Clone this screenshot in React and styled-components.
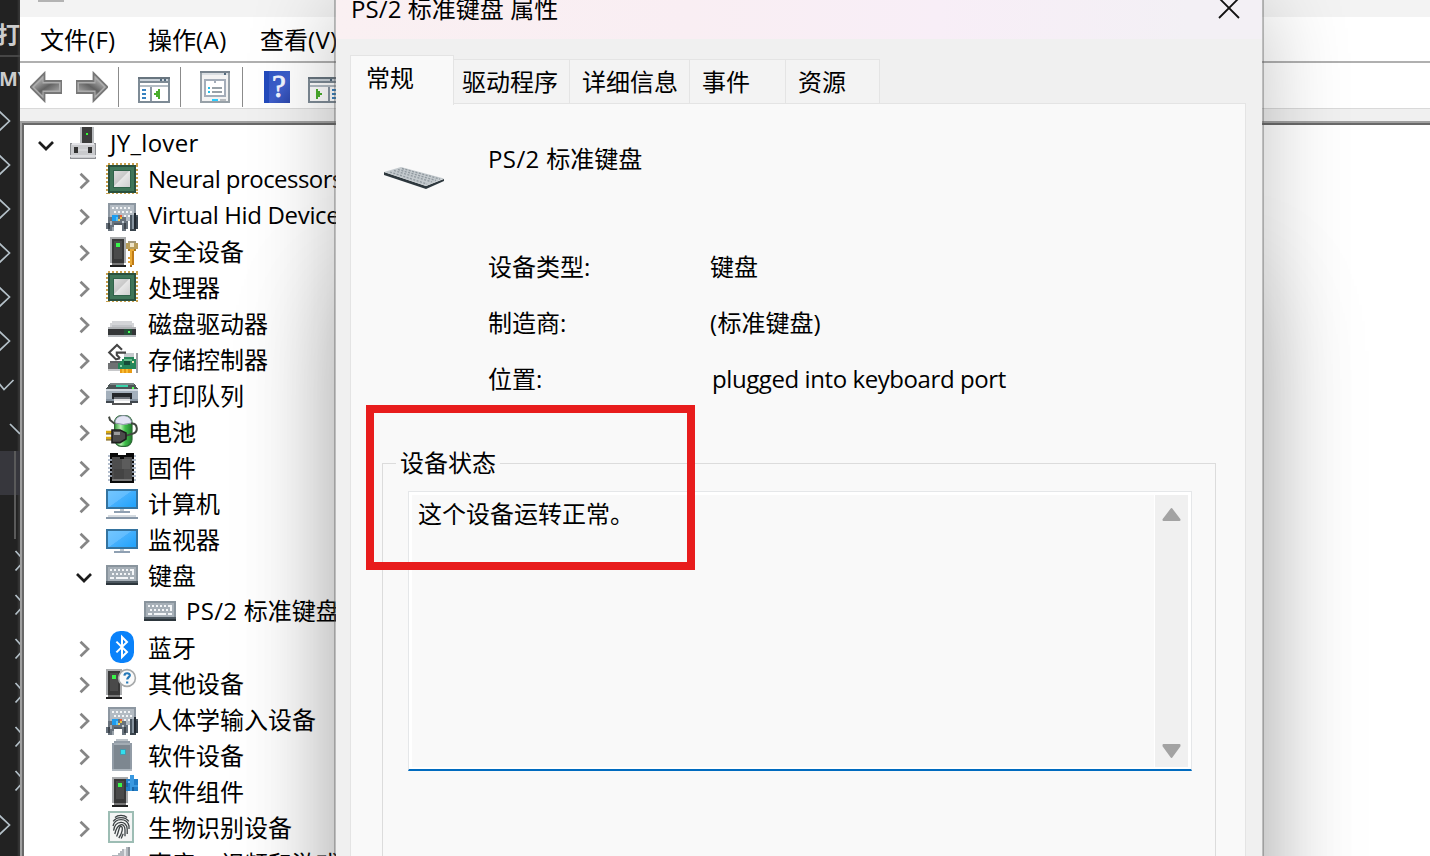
import React from "react";
import styled, { createGlobalStyle } from "styled-components";

const GlobalStyle = createGlobalStyle`
  body { margin: 0; overflow: hidden; }
  * { box-sizing: border-box; }
`;

const Desktop = styled.div`
  position: relative;
  width: 1430px;
  height: 856px;
  overflow: hidden;
  background: #fff;
  color: #000;
  font: 24px/36px "Open Sans", "Noto Sans CJK SC", sans-serif;
  white-space: nowrap;
`;

const LatinRun = styled.span`
  letter-spacing: ${(p) => p.$spacing}px;
`;

/* Latin runs carry their own tracking beside the ideographs. */
function Label({ children, spacing = 0.3 }) {
  const runs = children.split(/([\x20-\x7e]+)/).filter(Boolean);
  return runs.map((run, i) =>
    /^[\x20-\x7e]/.test(run) ? (
      <LatinRun key={i} $spacing={spacing}>{run}</LatinRun>
    ) : (
      run
    )
  );
}

/* ---------- editor strip ---------- */

const EditorStrip = styled.div`
  position: absolute;
  inset: 0 auto 0 0;
  width: 20px;
  overflow: hidden;
  background: linear-gradient(90deg, #222 0 17px, #363636 19px);
  color: #ccc;
`;
const EditorHeading = styled.div`
  height: 57px;
  padding-top: 16px;
  border-bottom: 2px solid #464646;
  text-indent: -3px;
  font-size: 23px;
  font-weight: 600;
`;
const EditorProject = styled.div`
  height: 42px;
  line-height: 44px;
  font-size: 20px;
  font-weight: 700;
  text-indent: -1px;
`;
const EditorLine = styled.div`
  display: flex;
  height: 44px;
  background: ${(p) => (p.$selected ? "#37373d" : "transparent")};
`;
const Guide = styled.div`
  width: 16px;
  border-right: 2px solid #5a5a5a;
`;
const StripSvg = styled.svg`
  display: block;
  flex: none;
  width: 20px;
  height: 44px;
  fill: none;
  stroke: #b4c0c8;
  stroke-width: 1.7;
`;

const stripPaths = {
  right: "M-1 12 L9.5 22 L-1 32",
  down: "M-3 18 L4 26.5 L13.5 17",
  deep: "M10 17 L20 27",
  deepRight: "M15.5 12 L20.500 17.500 M20.500 26 L15.500 31.500",
};
const stripLines = [
  "right", "right", "right", "right", "right", "right", "down", "deep",
  "selected", "guide", "deepRight", "deepRight", "deepRight", "deepRight",
  "deepRight", "deepRight", "right",
];

function Editor() {
  return (
    <EditorStrip>
      <EditorHeading>打</EditorHeading>
      <EditorProject>MY</EditorProject>
      {stripLines.map((kind, i) => (
        <EditorLine key={i} $selected={kind === "selected"}>
          {stripPaths[kind] ? (
            <StripSvg viewBox="0 0 20 44"><path d={stripPaths[kind]} /></StripSvg>
          ) : (
            <Guide />
          )}
        </EditorLine>
      ))}
    </EditorStrip>
  );
}

/* ---------- small pixel drawings, on a 16 unit grid ---------- */

const Glyph = styled.svg`
  display: block;
  flex: none;
  width: 32px;
  height: 32px;
`;

/* Each entry is [x, y, width, height, fill]. */
function Px({ items }) {
  return items.map(([x, y, w, h, f], i) => (
    <rect key={i} x={x} y={y} width={w} height={h} fill={f} />
  ));
}

const crisp = { viewBox: "0 0 16 16", shapeRendering: "crispEdges" };

const ComputerTower = () => (
  <Glyph {...crisp}>
    <Px items={[
      [6, 0, 7, 9, "#b9bcbf"], [7, 0, 5, 8, "#3c3c3c"], [9, 3, 1, 1, "#3f3"],
      [1, 8, 13, 8, "#8e9094"], [1.5, 8.5, 12, 7, "#c9cacd"], [2, 8, 11, 1, "#e4e4e8"],
      [3, 10, 2, 3, "#333"], [10, 10, 2, 3, "#333"], [5, 11, 5, 1, "#d5d6d9"], [1, 14, 13, 1, "#dcdde0"],
    ]} />
  </Glyph>
);

const Chip = () => (
  <Glyph {...crisp}>
    <defs>
      <linearGradient id="die" x2="1" y2="1">
        <stop offset="0" stopColor="#dedede" /><stop offset=".45" stopColor="#c9c9c9" />
        <stop offset=".5" stopColor="#e6e6e6" /><stop offset="1" stopColor="#cfcfcf" />
      </linearGradient>
    </defs>
    <path d="M1 .5H16M1 15H16M.5 1V15.5M15.5 1V15.5" stroke="#c9a04e" strokeDasharray="1 1" />
    <Px items={[[1, 1, 14, 14, "#29503e"], [2, 2, 12, 12, "#3f7558"], [3.5, 3.5, 9, 9, "#2f6249"], [4, 4, 8, 8, "url(#die)"]]} />
  </Glyph>
);

const HumanInput = () => (
  <Glyph {...crisp}>
    <Px items={[
      [1, 2, 14, 9, "#8d97a1"], [2, 3, 12, 8, "#b3bbc3"],
      ...[3, 5, 7, 9, 11].flatMap((x) => [[x, 4, 1, 1, "#f3f5f7"], [x + 1, 6, 1, 1, "#f3f5f7"], [x, 8, 1, 1, "#f3f5f7"]]),
    ]} />
    <path d="M1 9H3V8H8V9H10V11H11V15H10V16H8V13H4V16H1V15H0V12H1Z" fill="#68727c" />
    <Px items={[
      [3, 8, 3, 3, "#1d9df0"], [5, 9, 1, 2, "#55c3ff"], [7, 8, 1, 1, "#e95b35"], [7, 9, 1, 1, "#e8c341"],
      [6, 10, 1, 1, "#f1cc57"], [1, 12, 1, 3, "#3d454d"], [9, 12, 1, 3, "#3d454d"], [2, 11, 1, 2, "#aab3bc"],
      [8, 11, 1, 1, "#c4ccd4"], [4, 12, 4, 1, "#535c65"], [12, 8, 4, 7, "#4a5661"], [12, 15, 3, 1, "#39434c"], [13, 8, 1, 7, "#86939f"],
      [14, 7, 1, 8, "#202830"], [15, 9, 1, 6, "#38434e"], [3, 14, 1, 2, "#99a2aa"],
    ]} />
  </Glyph>
);

const towerAt = (x) => [
  [x, 1, 8, 13, "#a9abad"], [x + 1, 2, 6, 12, "#383838"], [x + 2, 3, 4, 9, "#4a4a4a"],
  [x + 3, 4, 2, 2, "#39f54a"], [x + 1, 14, 6, 1, "#777"], [x, 15, 8, 1, "#1f1f1f"],
];

const Security = () => (
  <Glyph {...crisp}>
    <Px items={[
      ...towerAt(2),
      [11, 3, 4, 1, "#a49a7c"], [10, 4, 6, 3, "#b79d5b"], [12, 4, 2, 2, "#eee5c9"], [11, 7, 4, 1, "#a9791f"],
      [12, 7, 2, 8, "#e9aa34"], [13, 8, 1, 7, "#c07b16"], [11, 11, 1, 1, "#dda03b"], [11, 13, 1, 1, "#dda03b"], [12, 15, 1, 1, "#a86b16"],
    ]} />
  </Glyph>
);

const Disk = () => (
  <Glyph {...crisp}>
    <path d="M3 7H13V8H14V10H15V11H1V10H2V8H3Z" fill="#d4d5d8" />
    <Px items={[[3, 9, 10, 1, "#c2c4c8"], [1, 10, 14, 1, "#b0b2b5"], [1, 11, 14, 3, "#343638"], [9, 11, 4, 3, "#275039"], [11, 12, 1, 1, "#46ff58"], [1, 14, 14, 1, "#b4b8bc"]]} />
  </Glyph>
);

const Storage = () => (
  <Glyph viewBox="0 0 16 16">
    <g shapeRendering="crispEdges">
      <Px items={[[2, 9, 5, 4, "#5d5f62"], [1, 10, 7, 3, "#6f7173"], [1, 13, 6, 1, "#c7c8ca"], [9, 5, 5, 3, "#c7cbce"]]} />
      <path d="M9 7H14V8H15V13H6V10H7V9H8V8H9Z" fill="#258659" />
      <Px items={[
        [9, 8, 4, 1, "#63bc89"], [9, 9, 3, 2, "#154b38"], [13, 9, 1, 1, "#efe8b1"],
        [7, 11, 1, 1, "#8ad5aa"], [15, 5, 1, 10, "#979b9f"], [7, 13, 6, 2, "#e99a13"], [8, 13, 1, 2, "#f7bd34"], [10, 13, 1, 2, "#f7bd34"],
      ]} />
    </g>
    <path d="M8 3.400 5.500 1 1.600 4.800 5 8.200 7 7.600M10 4.800H5.400V6L7 7.600" fill="none" stroke="#454545" strokeWidth="1.050" />
  </Glyph>
);

const Printer = () => (
  <Glyph {...crisp}>
    <path d="M2 2H14L16 5H0Z" fill="#4c5556" />
    <Px items={[
      [2, 2, 12, 1, "#7b8687"], [5, 3, 6, 1, "#38d3aa"], [13, 4, 1, 1, "#5aff59"], [0, 5, 16, 5, "#a4b0bc"], [0, 5, 16, 1, "#d1d9e1"],
      [0, 10, 16, 1, "#8794a1"], [3, 7, 10, 3, "#24282c"], [0, 11, 16, 1, "#40474e"], [4, 9, 8, 1, "#6e7379"], [4, 10, 8, 3, "#e4e5e7"], [3, 12, 10, 1, "#555"], [4, 11, 8, 1, "#fff"],
    ]} />
  </Glyph>
);

const Battery = () => (
  <Glyph viewBox="0 0 16 16">
    <defs>
      <linearGradient id="cell">
        <stop offset="0" stopColor="#3a9a40" /><stop offset=".35" stopColor="#b5f2b0" />
        <stop offset=".6" stopColor="#3fc04a" /><stop offset="1" stopColor="#1f7a2b" />
      </linearGradient>
    </defs>
    <rect x="4.300" y=".3" width="8.700" height="15.400" rx="3.400" fill="url(#cell)" stroke="#2c6a35" strokeWidth=".6" />
    <path d="M4.500 4C4.500-.9 12.800-.9 12.800 4Q8.600 5.500 4.500 4Z" fill="#e3e4f4" stroke="#8e93a8" strokeWidth=".5" />
    <path d="M1.500.8 2 2.500 4.500 4.500M12.500 4.300C16 4 16.300 8.500 13.500 9.300L9.500 10.500" fill="none" stroke="#41463f" />
    <path d="M0 8.500H4M0 11.500H4" stroke="#d9a80f" strokeWidth="1.200" />
    <path d="M0 9.400H4M0 12.400H4" stroke="#7b5d10" strokeWidth=".6" />
    <path d="M3 7.500H7L10 9V12L7 13.800H3Z" fill="#4b4b4b" stroke="#1e1e1e" strokeWidth=".8" />
    <path d="M4 8.500H7V10H4Z" fill="#9b9b9b" />
  </Glyph>
);

const Firmware = () => (
  <Glyph {...crisp}>
    <Px items={[2, 4, 6, 8, 10, 12, 14].map((y) => [1, y, 14, 1, "#b4bfce"])} />
    <Px items={[
      [2, 1, 12, 15, "#0a0a0a"], [6, 1, 4, 1, "#fff"], [3, 3, 10, 12, "#4d4d4d"], [6, 2, 4, 1, "#0a0a0a"], [7, 3, 2, 1, "#0a0a0a"],
      [7, 1, 2, 1, "#fff"], [8, 4, 4, 5, "#5c5c5c"], [4, 9, 5, 5, "#444"], [3, 14, 10, 1, "#777"],
      ...[4, 6, 8, 10, 12].flatMap((y) => [[2, y, 1, 1, "#8b95a3"], [13, y, 1, 1, "#8b95a3"]]),
    ]} />
  </Glyph>
);

const Screen = ({ y, base }) => (
  <Glyph {...crisp}>
    <defs>
      <linearGradient id="panel" x2="1" y2=".8">
        <stop offset="0" stopColor="#72c6ff" /><stop offset=".5" stopColor="#62bdff" />
        <stop offset=".52" stopColor="#45b0fd" /><stop offset="1" stopColor="#25a4fb" />
      </linearGradient>
    </defs>
    <Px items={[[0, y, 16, 10, "#34739f"], [1, y + 1, 14, 8, "url(#panel)"], [7, y + 10, 2, 1, "#b9c5cf"], [4, y + 11, 8, 1, "#8fa0b2"]]} />
    {base && <Px items={[[1, 14, 14, 1, "#d5dbe1"], [0, 15, 16, 1, "#8797a8"]]} />}
  </Glyph>
);
const Computer = () => <Screen y={1} base />;
const Monitor = () => <Screen y={3} />;

const Keyboard = () => (
  <Glyph {...crisp}>
    <Px items={[
      [0, 3, 16, 9, "#89949d"], [1, 4, 14, 7, "#a7b0b8"], [0, 11, 16, 2, "#2d363c"], [0, 11, 16, 1, "#4c575f"],
      ...[2, 4, 6, 8, 10, 12].flatMap((x) => [[x, 5, 1, 1, "#f4f6f8"], [x + 1, 7, 1, 1, "#f4f6f8"]]),
      [13, 5, 1, 3, "#f4f6f8"], [2, 9, 2, 1, "#f4f6f8"], [5, 9, 6, 1, "#f4f6f8"], [12, 9, 2, 1, "#f4f6f8"],
    ]} />
  </Glyph>
);

const Bluetooth = () => (
  <Glyph viewBox="0 0 16 16">
    <rect x="2" width="12" height="16" rx="5.2" fill="#0a82fa" />
    <path d="M5.2 5.3 10.5 10.5 8 13V3L10.5 5.5 5.2 10.7" fill="none" stroke="#fff" strokeWidth="1" />
  </Glyph>
);

const OtherDevice = () => (
  <Glyph viewBox="0 0 16 16">
    <g shapeRendering="crispEdges"><Px items={towerAt(0)} /></g>
    <circle cx="10.5" cy="5.5" r="4.2" fill="#fafafa" stroke="#a6a9aa" strokeWidth=".8" />
    <path d="M9.2 4.3C9.3 2.7 12 2.8 11.9 4.2C11.8 5 10.6 5.2 10.6 6.3M10.6 7.2V8.2" stroke="#2478b8" strokeWidth="1.1" fill="none" />
  </Glyph>
);

const SoftwareDevice = () => (
  <Glyph {...crisp}>
    <path d="M5 0H11V1H12V2H13V16H3V2H4V1H5Z" fill="#929ca6" />
    <Px items={[[4, 2, 8, 13, "#7d8790"], [4, 2, 8, 1, "#a3acb4"], [7, 5, 3, 3, "#4799ab"], [7.5, 5.5, 2, 2, "#32dfee"], [3, 15, 10, 1, "#aeb7bf"], [5, 0, 6, 1, "#bbc2c8"]]} />
  </Glyph>
);

const SoftwareComponent = () => (
  <Glyph {...crisp}>
    <Px items={[...towerAt(3), [10, 2, 6, 6, "#217dc7"], [12, 0, 2, 8, "#3a99e0"], [11, 3, 1, 1, "#6fb8ee"], [10, 4, 1, 2, "#1a65a5"], [14, 5, 2, 1, "#3a99e0"], [13, 6, 1, 2, "#1a65a5"]]} />
  </Glyph>
);

const Fingerprint = () => (
  <Glyph viewBox="0 0 16 16">
    <rect x="1.5" y=".5" width="12" height="15" fill="#f4f5f5" stroke="#9dbdb4" />
    <g fill="none" stroke="#3c4144" strokeWidth=".65">
      <path d="M4.5 3.2C6 1.8 9 1.8 10.5 3.2M3.6 5.2C5.4 2.7 9.6 2.7 11.4 5.2M3.5 7.5C4.5 3.2 10.5 3.2 11.5 7.5V9M3.8 9.8C4.5 4.5 10.5 4.5 10.6 9V11.5M4.4 11.5C5.6 6 9.4 5.5 9.5 9.4V12.6M5.3 12.8C6.6 10 6.4 7.5 7.5 7.7C8.8 8 8 11.4 6.4 13.5M7.6 13.7 8.6 11.4" />
    </g>
  </Glyph>
);

const Speaker = () => (
  <Glyph {...crisp}>
    <path d="M10 0H12V15H10L6 11H3V4H6V3H7V2H8V1H10Z" fill="#b2b7bd" />
    <Px items={[[9, 1, 1, 13, "#dfe2e5"], [11, 0, 1, 15, "#8d949b"]]} />
  </Glyph>
);

/* ---------- device manager ---------- */

const Manager = styled.section`
  position: absolute;
  inset: 0 0 0 20px;
  display: flex;
  flex-direction: column;
  background: #fff;
`;
const ManagerTitle = styled.div`
  height: 17px;
  flex: none;
  padding-left: 18px;
  background: #f3f3f3;
`;
const TitleIcon = styled.div`
  width: 26px;
  height: 2px;
  background: #b3b3b3;
`;
const MenuBar = styled.nav`
  display: flex;
  flex: none;
  gap: 31px;
  height: 46px;
  padding: 5px 0 0 20px;
  border-bottom: 2px solid #b0b0b0;
`;
const MenuItem = styled.span`
  width: ${(p) => p.$width}px;
`;
const ToolBar = styled.div`
  display: flex;
  flex: none;
  align-items: center;
  height: 46px;
  padding: 3px 0 0 10px;
  border-bottom: 1px solid #d9d9d9;
`;
const ToolButton = styled.svg`
  display: block;
  flex: none;
  width: 32px;
  height: 32px;
  margin-right: ${(p) => p.$gap}px;
`;
const Divider = styled.i`
  width: 1px;
  height: 40px;
  margin-right: ${(p) => p.$gap}px;
  background: #8b8b8b;
`;
const TreeFrame = styled.div`
  flex: 1;
  min-height: 0;
  padding-top: 12px;
  background: #f0f0f0;
`;
const Tree = styled.div`
  height: 100%;
  overflow: hidden;
  background: #fff;
  border: solid #a0a0a0;
  border-width: 2px 0 0 2px;
`;
const TreeInner = styled.div`
  height: 100%;
  border: solid #696969;
  border-width: 2px 0 0 2px;
`;
const TreeRow = styled.div`
  display: flex;
  align-items: center;
  height: 36px;
  padding-left: ${(p) => p.$indent}px;
`;
const RowText = styled.span`
  padding: ${(p) => (p.$latin ? 0 : 1)}px 0 0 10px;
`;
const Arrow = styled.svg`
  flex: none;
  width: 24px;
  height: 24px;
  margin-right: 10px;
  fill: none;
  stroke: ${(p) => (p.$open ? "#1c1c1c" : "#868686")};
  stroke-width: 2.7;
`;
const ArrowSpace = styled.span`
  flex: none;
  width: 34px;
`;

const nodes = [
  { level: 0, state: "open", Icon: ComputerTower, text: "JY_lover" },
  { level: 1, Icon: Chip, text: "Neural processors", spacing: -0.55 },
  { level: 1, Icon: HumanInput, text: "Virtual Hid Device", spacing: -0.35 },
  { level: 1, Icon: Security, text: "安全设备" },
  { level: 1, Icon: Chip, text: "处理器" },
  { level: 1, Icon: Disk, text: "磁盘驱动器" },
  { level: 1, Icon: Storage, text: "存储控制器" },
  { level: 1, Icon: Printer, text: "打印队列" },
  { level: 1, Icon: Battery, text: "电池" },
  { level: 1, Icon: Firmware, text: "固件" },
  { level: 1, Icon: Computer, text: "计算机" },
  { level: 1, Icon: Monitor, text: "监视器" },
  { level: 1, state: "open", Icon: Keyboard, text: "键盘" },
  { level: 2, state: "leaf", Icon: Keyboard, text: "PS/2 标准键盘" },
  { level: 1, Icon: Bluetooth, text: "蓝牙" },
  { level: 1, Icon: OtherDevice, text: "其他设备" },
  { level: 1, Icon: HumanInput, text: "人体学输入设备" },
  { level: 1, Icon: SoftwareDevice, text: "软件设备" },
  { level: 1, Icon: SoftwareComponent, text: "软件组件" },
  { level: 1, Icon: Fingerprint, text: "生物识别设备" },
  { level: 1, Icon: Speaker, text: "声音、视频和游戏控制器" },
];

function Node({ level, state, Icon, text, spacing }) {
  return (
    <TreeRow $indent={10 + level * 38}>
      {state === "leaf" ? (
        <ArrowSpace />
      ) : (
        <Arrow $open={state === "open"} viewBox="0 0 24 24">
          <path d={state === "open" ? "M5 11 12 18 19 11" : "M8.5 6.700 16 14 8.5 21.300"} />
        </Arrow>
      )}
      <Icon />
      <RowText $latin={/[A-Z]/.test(text)}><Label spacing={spacing}>{text}</Label></RowText>
    </TreeRow>
  );
}

const arrowHead = "M.5 16 14.500 2V10H31.5V22H14.500V30Z";

function BackForward({ flip, gap }) {
  return (
    <ToolButton $gap={gap} viewBox="0 0 32 32">
      <defs>
        <linearGradient id="steel" x2="1" y2="1">
          <stop offset="0" stopColor="#c9c9c9" /><stop offset=".5" stopColor="#626262" /><stop offset="1" stopColor="#b5b5b5" />
        </linearGradient>
      </defs>
      <g transform={flip ? "matrix(-1 0 0 1 32 0)" : undefined}>
        <path d={arrowHead} fill="#adadad" stroke="#777" strokeWidth="1.800" />
        <path d="M4 16 12.5 7.500V12.500H29V19.500H12.5V24.5Z" fill="url(#steel)" />
      </g>
    </ToolButton>
  );
}

const PaneLeft = ({ gap }) => (
  <ToolButton $gap={gap} {...crisp}>
    <Px items={[
      [0, 3, 16, 13, "#7e8b96"], [0, 3, 16, 1, "#68757f"], [1, 4, 14, 1, "#cbd3da"], [11, 4, 1, 1, "#536a7e"], [13, 4, 1, 1, "#536a7e"],
      [1, 6, 14, 9, "#fff"], [1, 7, 14, 1, "#b4bdc5"], [6, 8, 1, 7, "#8b98a5"], [2, 9, 2, 1, "#3882c0"], [2, 11, 2, 1, "#3882c0"], [2, 13, 2, 1, "#3882c0"],
    ]} />
    <path d="M11 9V14H10V13H9V12H8V11H9V10H10V9Z" fill="#4aae2c" />
  </ToolButton>
);
const PaneRight = ({ gap }) => (
  <ToolButton $gap={gap} {...crisp}>
    <Px items={[
      [0, 3, 16, 13, "#7e8b96"], [0, 3, 16, 1, "#68757f"], [1, 4, 14, 1, "#cbd3da"], [11, 4, 1, 1, "#536a7e"],
      [1, 6, 14, 9, "#fff"], [1, 7, 14, 1, "#b4bdc5"], [10, 8, 1, 7, "#8b98a5"], [12, 9, 2, 1, "#3882c0"], [12, 11, 2, 1, "#3882c0"], [12, 13, 2, 1, "#3882c0"],
    ]} />
    <path d="M4 9V14H5V13H6V12H7V11H6V10H5V9Z" fill="#4aae2c" />
  </ToolButton>
);
const Properties = ({ gap }) => (
  <ToolButton $gap={gap} {...crisp}>
    <Px items={[
      [0, 0, 15, 16, "#98a1a8"], [0, 0, 15, 1, "#78848e"], [1, 1, 13, 1, "#d9dee2"], [12, 1, 1, 1, "#536a7e"], [1, 2, 13, 13, "#f3f3f3"],
      [2, 4, 11, 9, "#a4adb9"], [3, 5, 4, 7, "#fff"], [8, 5, 4, 1, "#fff"], [3, 6, 9, 6, "#fff"],
      [4, 8, 1, 1, "#20bdea"], [6, 8, 5, 1, "#98a1a8"], [4, 10, 1, 1, "#20bdea"], [6, 10, 5, 1, "#98a1a8"], [6, 14, 3, 1, "#2accff"], [10, 14, 3, 1, "#b8bcc0"],
    ]} />
  </ToolButton>
);
const HelpMark = styled.text`
  font: 400 31px "Liberation Serif", serif;
  fill: #f2f5ff;
  stroke: #f2f5ff;
  stroke-width: 0.8;
  text-anchor: middle;
`;
const Help = ({ gap }) => (
  <ToolButton $gap={gap} viewBox="0 0 32 32">
    <defs>
      <linearGradient id="book" x2="1" y2="1"><stop offset="0" stopColor="#2d55c3" /><stop offset=".6" stopColor="#3f5fcb" /><stop offset="1" stopColor="#2c47a9" /></linearGradient>
    </defs>
    <rect x="2" width="26" height="32" fill="url(#book)" />
    <rect x="2" width="5" height="32" fill="#234abd" />
    <HelpMark x="17" y="26">?</HelpMark>
  </ToolButton>
);

function DeviceManager() {
  return (
    <Manager>
      <ManagerTitle><TitleIcon /></ManagerTitle>
      <MenuBar>
        <MenuItem $width={77}><Label>文件(F)</Label></MenuItem>
        <MenuItem $width={81}><Label spacing={0.5}>操作(A)</Label></MenuItem>
        <MenuItem $width={81}><Label>查看(V)</Label></MenuItem>
      </MenuBar>
      <ToolBar>
        <BackForward gap={14} />
        <BackForward flip gap={10} />
        <Divider $gap={19} />
        <PaneLeft gap={10} />
        <Divider $gap={19} />
        <Properties gap={10} />
        <Divider $gap={19} />
        <Help gap={14} />
        <PaneRight gap={0} />
      </ToolBar>
      <TreeFrame>
        <Tree>
          <TreeInner>
            {nodes.map((n, i) => <Node key={i} {...n} />)}
          </TreeInner>
        </Tree>
      </TreeFrame>
    </Manager>
  );
}

/* ---------- properties dialog ---------- */

const Dialog = styled.section`
  position: absolute;
  top: -24px;
  left: 334px;
  width: 930px;
  height: 1100px;
  border: 2px solid rgba(90, 90, 90, 0.4);
  background: #f0f0f0;
  background-clip: padding-box;
  box-shadow: 0 30px 80px rgba(0, 0, 0, 0.24), 0 310px 100px rgba(0, 0, 0, 0.17);
`;
const DialogTitle = styled.header`
  display: flex;
  justify-content: space-between;
  height: 61px;
  padding: 13px 22px 0 15px;
  background: linear-gradient(90deg, #faf0f2, #f9eef3 38%, #f8eef7 65%, #f3f0f5 92%);
`;
const CloseIcon = styled.svg`
  width: 22px;
  height: 22px;
  margin-top: 6px;
  stroke: #111;
  stroke-width: 1.8;
`;
const TabStrip = styled.div`
  display: flex;
  align-items: flex-end;
  height: 64px;
  padding-left: 14px;
`;
const Tab = styled.div`
  width: ${(p) => p.$width}px;
  height: 44px;
  padding: 4px 0 0 ${(p) => p.$inset}px;
  border: solid #e4e4e4;
  border-width: 1px 1px 0 0;
  background: #f3f3f3;
`;
const ActiveTab = styled(Tab)`
  position: relative;
  height: 50px;
  margin-bottom: -2px;
  border-left-width: 1px;
  background: #f9f9f9;
`;
const Page = styled.div`
  width: 896px;
  height: 900px;
  margin-left: 14px;
  padding: 37px 29px 0 31px;
  border: 1px solid #e4e4e4;
  background: #f9f9f9;
`;
const DeviceHeader = styled.div`
  display: flex;
  height: 108px;
`;
const DevicePicture = styled.svg`
  width: 64px;
  height: 40px;
  margin: 16px 42px 0 0;
`;
const Facts = styled.dl`
  display: grid;
  grid-template-columns: 222px 1fr;
  grid-auto-rows: 56px;
  margin: 0 0 0 106px;
`;
const Fact = styled.dd`
  margin: 0;
  padding-left: ${(p) => p.$inset || 0}px;
`;
const Group = styled.fieldset`
  height: 600px;
  min-width: 0;
  margin: 28px 0 0;
  padding: 10px 23px 0 25px;
  border: 1px solid #dcdcdc;
`;
const Legend = styled.legend`
  margin-left: -12px;
  padding: 0 4px;
`;
const StatusBox = styled.div`
  display: flex;
  height: 280px;
  padding: 3px 3px 2px;
  border: 1px solid #e5e7e9;
  border-bottom: 2px solid #006bbf;
  background: #fff;
`;
const StatusText = styled.div`
  flex: 1;
  padding: 1px 0 0 6px;
  margin-right: 1px;
  background: #f9f9f9;
`;
const ScrollBar = styled.div`
  display: flex;
  flex-direction: column;
  justify-content: space-between;
  width: 33px;
  padding: 10px 7px 7px;
  background: #f0f0f0;
`;
const ScrollArrow = styled.svg`
  display: block;
  width: 19px;
  height: 17px;
  fill: #a3a3a3;
  stroke: #a3a3a3;
  stroke-width: 2;
  stroke-linejoin: round;
`;
const Highlight = styled.div`
  position: absolute;
  top: 405px;
  left: 366px;
  width: 329px;
  height: 165px;
  border: 8px solid #e81c1c;
`;

const tabs = [
  { text: "驱动程序", width: 116, inset: 8 },
  { text: "详细信息", width: 120, inset: 12 },
  { text: "事件", width: 96, inset: 12 },
  { text: "资源", width: 94, inset: 12 },
];
const facts = [
  { name: "设备类型:", value: "键盘" },
  { name: "制造商:", value: "(标准键盘)" },
  { name: "位置:", value: "plugged into keyboard port", spacing: -0.42, inset: 2 },
];

function PropertiesDialog() {
  return (
    <Dialog>
      <DialogTitle>
        <span><Label spacing={0.1}>PS/2 标准键盘 属性</Label></span>
        <CloseIcon viewBox="0 0 22 22"><path d="M1 1 21 21M21 1 1 21" /></CloseIcon>
      </DialogTitle>
      <TabStrip>
        <ActiveTab $width={104} $inset={15}>常规</ActiveTab>
        {tabs.map((t) => <Tab key={t.text} $width={t.width} $inset={t.inset}>{t.text}</Tab>)}
      </TabStrip>
      <Page>
        <DeviceHeader>
          <DevicePicture viewBox="0 0 64 40">
            <path d="M2 15 44 29 62 22V24L44 32 2 18Z" fill="#2e383e" />
            <path d="M2 15 19 10 62 21.5 44 29Z" fill="#c3c9cd" />
            <g fill="none" stroke="#90999f" strokeWidth="1.3" strokeDasharray="2 1.5">
              <path d="M8 15 45 27M12 13.500 50 25M16 12.500 54 23.500M20 11.500 58 22" />
            </g>
          </DevicePicture>
          <span><Label spacing={0.4}>PS/2 标准键盘</Label></span>
        </DeviceHeader>
        <Facts>
          {facts.map(({ name, value, spacing, inset }) => (
            <React.Fragment key={name}>
              <dt><Label spacing={-0.5}>{name}</Label></dt>
              <Fact $inset={inset}><Label spacing={spacing}>{value}</Label></Fact>
            </React.Fragment>
          ))}
        </Facts>
        <Group>
          <Legend>设备状态</Legend>
          <StatusBox>
            <StatusText>这个设备运转正常。</StatusText>
            <ScrollBar>
              <ScrollArrow viewBox="0 0 19 17"><path d="M9.5 4 17.5 14.5V15H1.5V14.5Z" /></ScrollArrow>
              <ScrollArrow viewBox="0 0 19 17"><path d="M9.5 14 17.5 3V2H1.5V3Z" /></ScrollArrow>
            </ScrollBar>
          </StatusBox>
        </Group>
      </Page>
    </Dialog>
  );
}

export default function App() {
  return (
    <Desktop>
      <GlobalStyle />
      <Editor />
      <DeviceManager />
      <PropertiesDialog />
      <Highlight />
    </Desktop>
  );
}
